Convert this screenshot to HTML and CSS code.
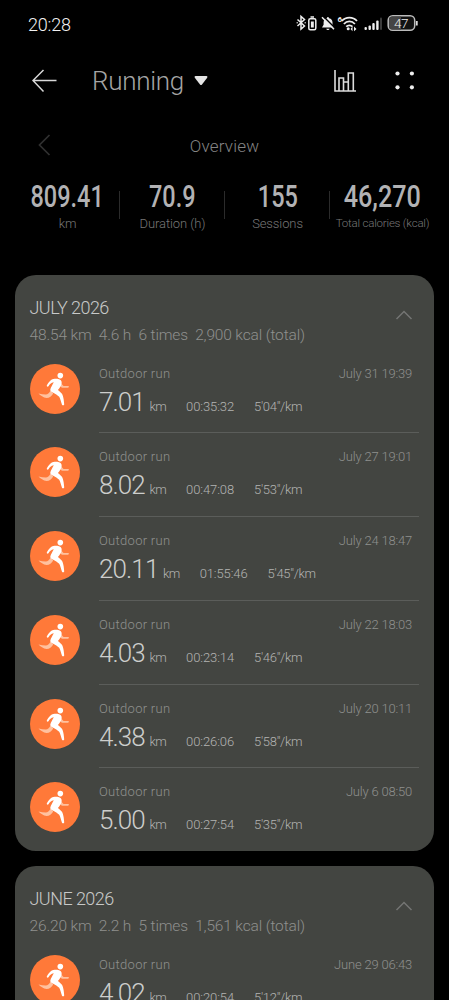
FILE: index.html
```
<!DOCTYPE html>
<html lang="en">
<head>
<meta charset="utf-8">
<title>Running</title>
<link rel="stylesheet" href="styles.css">
</head>
<body>
<svg class="defs" width="0" height="0">
  <symbol id="runner" viewBox="0 0 50 50">
    <circle cx="25" cy="25" r="25" fill="#ff7939"/>
    <path d="M20.600 26.400c-1.400 2.400-3 4-4.700 4.100-2.500 0-4.900-.5-7.400-1 1.800 1.800 5 4.300 8 4.600 3 0 5.200-2 6.700-4.500z" fill="#ffc19f"/>
    <path d="M31.500 19.800l2 2.200 5 .1c.8.600.3 1.700-.6 1.700h-5.400c-1 0-1.900-1-2.500-2z" fill="#ffc19f"/>
    <circle cx="30.300" cy="11.600" r="2.800" fill="#fff"/>
    <path d="M28.200 14.900c-3.400-.2-5.700.2-7.700 1.500-1.700 1.300-3 3.600-3.700 5.100-.3 1 .9 1.600 1.700.7 1.200-1.700 2.400-3.600 5.300-3.900-1.600 3-2.900 5-3.500 7.200-.2 1.500 1 2.300 2.500 3 2.400 1.100 4.900 2.800 6.400 4.300 1 1.800 1.800 5.100 2.800 7.900.5 1 2 .8 2.200-.3-.200-3.100-.7-7-1.700-9.600-1.100-2-2.900-3.200-4.600-4.700 1.700-2.200 3.500-4.600 3.800-6.900.2-2.500-1.300-4.100-3.500-4.300z" fill="#fff"/>
  </symbol>
  <symbol id="up" viewBox="0 0 18 10"><path d="M1.500 9L9 1.500 16.500 9" fill="none" stroke="#747573" stroke-width="1.500"/></symbol>
</svg>
<header class="status">
  <span class="clock">20:28</span>
  <svg class="status-icons" width="124" height="20" viewBox="0 0 124 20">
    <g fill="none" stroke="#eee" stroke-width="1.500">
      <path d="M2.500 6.500l7 6.500-3.500 3V3.500l3.500 3-7 6.500"/>
      <rect x="13.800" y="5.700" width="7" height="11" rx="1.500"/>
      <path d="M15.500 4h3.500"/>
    </g>
    <rect x="15.900" y="8.500" width="2.900" height="6" fill="#eee"/>
    <path d="M1.500 9.800h1.500M9.500 9.800h1.500" stroke="#eee"/>
    <path d="M27 14.500l1.600-2.700V9.500c0-2.400 1.400-3.800 3.200-4.200.3-1.600 2-1.600 2.300 0 2.200.5 3.400 2 3.400 4.200v2.300l1.600 2.700zM31.200 15.700h3.400c-.5 1.700-2.900 1.700-3.400 0z" fill="#eee"/>
    <path d="M28.500 3.500l11.500 11.500" stroke="#000" stroke-width="1.500"/>
    <path d="M27 4.300l12 12" stroke="#eee" stroke-width="1.500"/>
    <text class="wifi-gen" x="42.500" y="9">6</text>
    <g fill="none" stroke="#eee" stroke-width="1.800">
      <path d="M46.800 8c4-4.500 11.200-4.500 15.200 0M48.900 11c3-3.400 8-3.400 11 0M51.200 13.700c1.800-1.900 4.500-1.900 6.300 0"/>
    </g>
    <circle cx="53.200" cy="15.800" r="1.500" fill="#eee"/>
    <path d="M55.500 15.900l2-2.300v4.600zM61.500 15.900l-2.500-2.300v4.600z" fill="#eee"/>
    <g fill="#eee">
      <rect x="69.500" y="14" width="2.400" height="3" rx="1"/><rect x="73.500" y="12.500" width="2.400" height="4.500" rx="1"/><rect x="77.300" y="10" width="2.400" height="7" rx="1"/><rect x="81.200" y="7.500" width="2.400" height="9.500" rx="1"/>
      <rect x="85" y="4.500" width="2" height="12.500" rx="1" fill="#3c3c3c"/>
    </g>
    <rect x="93.200" y="2.800" width="26.500" height="14.500" rx="4.500" fill="#111" stroke="#bbb" stroke-width="1.500"/>
    <path d="M97 3.600h9v12.900h-9a3 3 0 0 1-3-3V6.600a3 3 0 0 1 3-3z" fill="#444"/>
    <path d="M121.800 8v4.500" stroke="#ddd" stroke-width="1.800"/>
    <text class="battery" x="99" y="15">47</text>
  </svg>
</header>
<nav class="bar">
  <svg class="back" width="26" height="24" viewBox="0 0 26 24"><path d="M24.500 11.500H1.500M11.500 1L1 11.500 11.500 22.500" fill="none" stroke="#d8d8d8" stroke-width="1.500"/></svg>
  <h1 class="title">Running</h1>
  <svg class="caret" width="14" height="10" viewBox="0 0 14 10"><path d="M1.500 0h11q1.500.3.700 1.700L8 8.600q-1 1-2 0L.8 1.700Q0 .3 1.500 0z" fill="#e4e4e4"/></svg>
  <svg class="chart" width="23" height="24" viewBox="0 0 23 24"><path d="M1 1v21H22M5 22V9h4.500V22M9.500 13h4.800M14.300 22V4h5V22" fill="none" stroke="#dcdcdc" stroke-width="1.600"/></svg>
  <svg class="more" width="20" height="20" viewBox="0 0 20 20" fill="#eee"><circle cx="2.500" cy="2.500" r="2.100"/><circle cx="16.900" cy="2.500" r="2.100"/><circle cx="2.500" cy="16.300" r="2.100"/><circle cx="16.900" cy="16.300" r="2.100"/></svg>
</nav>
<section class="overview">
  <div class="overview-head">
    <svg class="prev" width="13" height="22" viewBox="0 0 13 22"><path d="M11.500 1L1.500 11l10 10" fill="none" stroke="#303030" stroke-width="1.700"/></svg>
    <h2 class="overview-title">Overview</h2>
  </div>
  <div class="stats">
    <div class="stat"><b class="figure">809.41</b><span class="caption">km</span></div>
    <div class="stat"><b class="figure">70.9</b><span class="caption">Duration (h)</span></div>
    <div class="stat"><b class="figure">155</b><span class="caption">Sessions</span></div>
    <div class="stat"><b class="figure wide">46,270</b><span class="caption small">Total calories (kcal)</span></div>
  </div>
</section>
<main class="months" id="months"></main>
<script src="app.js"></script>
</body>
</html>
```
FILE: styles.css
```
* { box-sizing: border-box; margin: 0; padding: 0; }
body {
  width: 449px;
  height: 1000px;
  overflow: hidden;
  background: #000;
  color: #c6c7c6;
  font-family: Roboto, "Liberation Sans", sans-serif;
  font-weight: 300;
}
svg { display: block; flex: none; }
.defs { position: absolute; }
.status { height: 46px; padding: 13px 30px 0 28px; display: flex; justify-content: space-between; }
.clock { font-size: 18px; line-height: 23px; letter-spacing: -.2px; color: #f2f2f2; }
.status-icons { width: 124px; }
.wifi-gen { font: 700 8px Roboto, sans-serif; fill: #eee; }
.battery { font: 300 13.500px Roboto, sans-serif; letter-spacing: -.6px; fill: #eee; }
.bar { height: 70px; padding: 0 34px 0 32px; display: flex; align-items: center; }
.title { width: 92px; white-space: nowrap; margin-left: 34px; font-size: 26px; line-height: 32px; font-weight: 300; letter-spacing: -.3px; color: #a5a5a5; }
.caret { margin-left: 10px; }
.chart { margin-left: auto; }
.more { margin-left: 38px; }
.overview { height: 158.500px; }
.overview-head { position: relative; height: 60px; display: grid; place-items: center; }
.prev { position: absolute; left: 38px; top: 18px; }
.overview-title { font-size: 17px; font-weight: 300; letter-spacing: .2px; color: #848484; }
.stats { display: grid; grid-template-columns: 105px 105px 105px 105px; padding-left: 15px; }
.stat { height: 56px; display: flex; flex-direction: column; align-items: center; position: relative; white-space: nowrap; }
.stat + .stat::before { content: ""; position: absolute; left: -1px; top: 15px; width: 1px; height: 28px; background: #2b2b2b; }
.figure { font-size: 31.500px; line-height: 41px; margin-bottom: -1px; font-weight: 500; color: #b2b2b4; transform: scaleX(.745); }
.wide { transform: scaleX(.8); }
.caption { font-size: 13px; line-height: 15px; letter-spacing: -.1px; color: #777; }
.small { font-size: 11.500px; letter-spacing: -.2px; }
.months { padding: 0 15px; display: flex; flex-direction: column; gap: 15px; }
.card { background: #434541; border-radius: 21px; padding: 0 15px; height: 576.500px; flex: none; overflow: hidden; }
.card:last-child { height: 134px; border-radius: 21px 21px 0 0; }
.card-head { height: 75px; padding: 21px 6px 0 0; display: flex; justify-content: space-between; align-items: flex-start; }
.month { font-size: 18px; line-height: 24px; font-weight: 300; letter-spacing: -.55px; margin-left: -.5px; color: #c8c9c8; }
.totals { font-size: 15.500px; line-height: 20px; margin: 5px 0 0 -.5px; letter-spacing: -.15px; color: #8f908e; white-space: pre; }
.up { margin-top: 14px; }
.run { height: 83.750px; display: flex; gap: 19.500px; }
.avatar { margin: 14px 0 0 -.5px; }
.body { flex: 1; display: flex; flex-direction: column; border-bottom: 1px solid #5b5d5a; padding: 16px 7px 0 0; }
.run:last-child .body { border: 0; }
.line { display: flex; justify-content: space-between; height: 16px; font-size: 13px; line-height: 16px; color: #8f908e; }
.kind { letter-spacing: .3px; }
.date { letter-spacing: -.2px; }
.metrics { display: flex; align-items: baseline; margin-top: 4px; font-size: 13px; line-height: 32px; letter-spacing: -.1px; color: #b3b4b2; }
.distance { font-size: 26px; letter-spacing: -.9px; color: #cdcecc; }
.unit { margin-left: 4.500px; letter-spacing: -.6px; }
.time { margin-left: 20px; }
.pace { margin-left: 20px; letter-spacing: -.3px; }
```
FILE: app.js
```
const months = [
  { name: 'JULY 2026', totals: '48.54 km  4.6 h  6 times  2,900 kcal (total)', runs: [
    ['7.01', '00:35:32', '5\'04"/km', 'July 31 19:39'],
    ['8.02', '00:47:08', '5\'53"/km', 'July 27 19:01'],
    ['20.11', '01:55:46', '5\'45"/km', 'July 24 18:47'],
    ['4.03', '00:23:14', '5\'46"/km', 'July 22 18:03'],
    ['4.38', '00:26:06', '5\'58"/km', 'July 20 10:11'],
    ['5.00', '00:27:54', '5\'35"/km', 'July 6 08:50']
  ] },
  { name: 'JUNE 2026', totals: '26.20 km  2.2 h  5 times  1,561 kcal (total)', runs: [
    ['4.02', '00:20:54', '5\'12"/km', 'June 29 06:43']
  ] }
];

const runRow = ([distance, time, pace, date]) => `
  <article class="run">
    <svg class="avatar" width="50" height="50"><use href="#runner"/></svg>
    <div class="body">
      <div class="line"><span class="kind">Outdoor run</span><span class="date">${date}</span></div>
      <div class="metrics"><span class="distance">${distance}</span><span class="unit">km</span><span class="time">${time}</span><span class="pace">${pace}</span></div>
    </div>
  </article>`;

document.getElementById('months').innerHTML = months.map(m => `
  <section class="card">
    <div class="card-head">
      <div><h3 class="month">${m.name}</h3><p class="totals">${m.totals}</p></div>
      <svg class="up" width="18" height="10"><use href="#up"/></svg>
    </div>
    ${m.runs.map(runRow).join('')}
  </section>`).join('');
```
